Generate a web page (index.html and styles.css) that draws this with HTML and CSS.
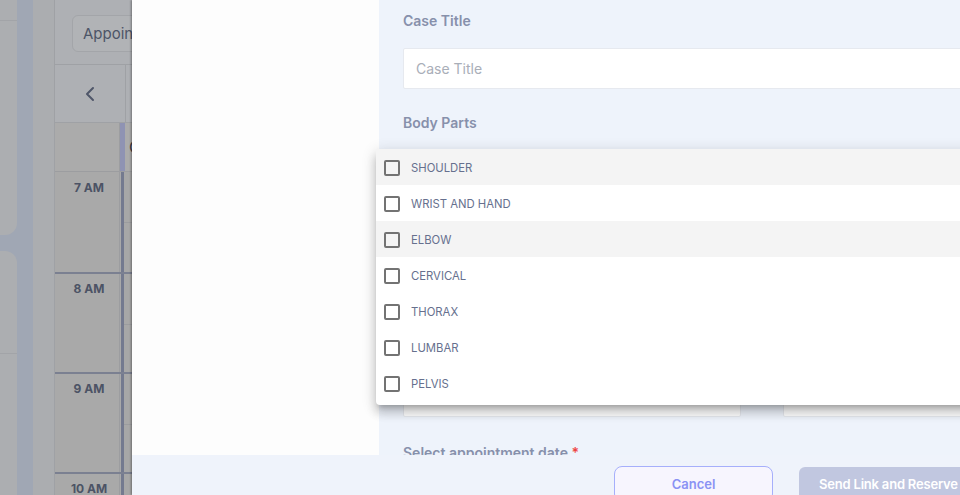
FILE: index.html
```html
<!DOCTYPE html>
<html lang="en">
<head>
  <meta charset="UTF-8" />
  <meta name="viewport" content="width=device-width, initial-scale=1.0" />
  <title>New Case</title>
  <link rel="stylesheet" href="styles.css">
</head>
<body>
  <div class="page">
    <aside class="side">
      <div class="side-card first"><div class="side-card-head"></div></div>
      <div class="side-card second"><div class="side-card-head"></div></div>
    </aside>
    <div class="rail"></div>
    <div class="gutter"></div>

    <section class="calendar">
      <div class="cal-head">
        <div class="view-select">Appointments</div>
      </div>
      <div class="cal-nav">
        <div class="nav-btn">
          <svg width="10" height="16" viewBox="0 0 10 16"><polyline points="8,2 2,8 8,14" fill="none" stroke="#4f5669" stroke-width="2" stroke-linecap="round" stroke-linejoin="round"/></svg>
        </div>
      </div>
      <div class="cal-days">
        <div class="time-cell"></div>
        <div class="day-bar"></div>
        <div class="day-label">C</div>
      </div>
      <div class="cal-hour first">
        <div class="time-cell">7 AM</div>
        <div class="day-line"></div>
        <div class="day-col"></div>
      </div>
      <div class="cal-hour">
        <div class="time-cell">8 AM</div>
        <div class="day-line"></div>
        <div class="day-col"></div>
      </div>
      <div class="cal-hour">
        <div class="time-cell">9 AM</div>
        <div class="day-line"></div>
        <div class="day-col"></div>
      </div>
      <div class="cal-hour">
        <div class="time-cell">10 AM</div>
        <div class="day-line"></div>
        <div class="day-col"></div>
      </div>
    </section>
  </div>

  <div class="modal">
    <div class="modal-main">
      <div class="modal-side"></div>
      <div class="modal-form">
        <label class="field-label">Case Title</label>
        <input class="text-input" type="text" placeholder="Case Title" />

        <label class="field-label spaced">Body Parts</label>
        <div class="select-box"></div>

        <div class="field-row">
          <div class="text-input wide"></div>
          <div class="text-input narrow"></div>
        </div>

        <label class="field-label date-label">Select appointment date <span class="req">*</span></label>

        <ul class="menu">
          <li class="menu-item shaded"><span class="check"></span>SHOULDER</li>
          <li class="menu-item"><span class="check"></span>WRIST AND HAND</li>
          <li class="menu-item shaded"><span class="check"></span>ELBOW</li>
          <li class="menu-item"><span class="check"></span>CERVICAL</li>
          <li class="menu-item"><span class="check"></span>THORAX</li>
          <li class="menu-item"><span class="check"></span>LUMBAR</li>
          <li class="menu-item"><span class="check"></span>PELVIS</li>
        </ul>
      </div>
    </div>
    <div class="modal-footer">
      <button class="btn btn-cancel">Cancel</button>
      <button class="btn btn-send">Send Link and Reserve Appointment</button>
    </div>
  </div>
</body>
</html>
```

FILE: styles.css
```css
body {
  margin: 0;
  width: 960px;
  height: 495px;
  overflow: hidden;
  font-family: 'Inter', 'Open Sans', sans-serif;
  background: #a9a9a9;
}

/* dimmed page behind the modal */
.page {
  display: flex;
  height: 495px;
  overflow: hidden;
}
.side {
  width: 17px;
  display: flex;
  flex-direction: column;
  gap: 16px;
  background: #a0a7b4;
}
.side-card {
  background: #acaeb1;
}
.side-card.first {
  height: 235px;
  border-radius: 0 0 12px 0;
}
.side-card.second {
  flex: 1;
  border-radius: 0 12px 0 0;
}
.side-card-head {
  height: 20px;
  border-bottom: 1px solid #a2a4a8;
}
.side-card.second .side-card-head {
  height: 102px;
}
.rail {
  width: 16px;
  background: #a0a7b4;
}
.gutter {
  width: 21px;
  background: #abadb0;
  border-right: 1px solid #9fa1a5;
}
.calendar {
  width: 120px;
  background: #aeb0b4;
}
.cal-head {
  height: 65px;
  border-bottom: 1px solid #9fa1a5;
  padding: 15px 0 0 17px;
  box-sizing: border-box;
}
.view-select {
  width: 140px;
  height: 37px;
  box-sizing: border-box;
  border: 1px solid #a3a5a9;
  border-radius: 6px;
  background: #b1b3b6;
  padding: 8px 0 0 10px;
  font-size: 15px;
  color: #4d5567;
  white-space: nowrap;
}
.cal-nav {
  height: 58px;
  border-bottom: 1px solid #9fa1a5;
  box-sizing: border-box;
}
.nav-btn {
  width: 70px;
  height: 100%;
  border-right: 1px solid #9fa1a5;
  display: flex;
  align-items: center;
  justify-content: center;
}
.cal-days {
  display: flex;
  height: 49px;
  background: #ababab;
  border-bottom: 1px solid #9c9da0;
  box-sizing: border-box;
}
.cal-days .time-cell {
  width: 65px;
  border-right: 1px solid #9c9da0;
}
.day-bar {
  width: 5px;
  background: #8f93b3;
}
.day-label {
  padding: 14px 0 0 4px;
  font-size: 16px;
  color: #3d3a44;
}
.cal-hour {
  display: flex;
  height: 100px;
  border-top: 2px solid #7b8091;
  box-sizing: border-box;
  background: #a9a9a9;
}
.cal-hour.first {
  border-top: none;
}
.time-cell {
  width: 65px;
  border-right: 1px solid #9c9da0;
  text-align: center;
  padding: 7px 0 0 4px;
  box-sizing: border-box;
  font-size: 12px;
  font-weight: 700;
  color: #4c5365;
}
.cal-hour.first .time-cell {
  padding-top: 8px;
}
.day-line {
  width: 3px;
  background: #747a8f;
  margin-left: 1px;
}
.day-col {
  flex: 1;
  background: #a7a7a7;
  background-image: linear-gradient(#9b9c9f, #9b9c9f);
  background-size: 100% 1px;
  background-position: 0 50px;
  background-repeat: no-repeat;
}

/* modal */
.modal {
  position: fixed;
  left: 132px;
  top: 0;
  right: 0;
  bottom: 0;
  display: flex;
  flex-direction: column;
  background: #fff;
  box-shadow: -1px 0 2px rgba(0,0,0,0.35);
}
.modal-main {
  display: flex;
  height: 455px;
  flex-shrink: 0;
  overflow: hidden;
}
.modal-side {
  width: 247px;
  flex-shrink: 0;
  background: #fdfdfd;
}
.modal-form {
  position: relative;
  flex: 1;
  min-width: 0;
  background: #eef3fb;
  padding: 11px 0 0 24px;
  display: flex;
  flex-direction: column;
  align-items: flex-start;
}
.field-label {
  font-size: 14px;
  line-height: 20px;
  font-weight: 600;
  color: #8790ab;
  white-space: nowrap;
}
.field-label.spaced {
  margin-top: 24px;
}
.req {
  color: #ef4444;
}
.text-input {
  margin-top: 17px;
  width: 600px;
  height: 41px;
  flex-shrink: 0;
  box-sizing: border-box;
  border: 1px solid #e6e9ef;
  border-radius: 2px;
  background: #fff;
  padding: 0 12px;
  font-family: inherit;
  font-size: 14px;
  color: #4b5563;
  outline: none;
}
.text-input::placeholder {
  color: #a9aeb8;
}
.select-box {
  margin-top: 16px;
  width: 600px;
  height: 41px;
  flex-shrink: 0;
  background: #fff;
}
.field-row {
  display: flex;
  gap: 42px;
  margin-top: 186px;
  flex-shrink: 0;
}
.field-row .text-input {
  margin-top: 0;
}
.text-input.wide {
  width: 338px;
}
.text-input.narrow {
  width: 200px;
}
.date-label {
  margin-top: 26px;
}

/* body parts dropdown */
.menu {
  position: absolute;
  left: -3px;
  top: 149px;
  width: 700px;
  margin: 0;
  padding: 0 0 4px;
  list-style: none;
  background: #fff;
  border-radius: 4px;
  box-shadow: 0 5px 5px -3px rgba(0,0,0,0.2), 0 8px 10px 1px rgba(0,0,0,0.14), 0 3px 14px 2px rgba(0,0,0,0.12);
}
.menu-item {
  display: flex;
  align-items: center;
  height: 36px;
  padding: 1px 0 0 8px;
  box-sizing: border-box;
  font-size: 11.3px;
  color: #66708e;
}
.menu-item.shaded {
  background: #f4f4f4;
}
.check {
  width: 16px;
  height: 16px;
  box-sizing: border-box;
  border: 2px solid #737373;
  border-radius: 2px;
  margin-right: 11px;
}

.modal-footer {
  flex: 1;
  background: #eff3fb;
  display: flex;
  align-items: flex-start;
  gap: 26px;
  padding: 11px 0 0 482px;
  overflow: hidden;
}
.btn {
  flex-shrink: 0;
  height: 36px;
  border-radius: 8px;
  font-family: inherit;
  font-size: 13px;
  font-weight: 600;
  white-space: nowrap;
}
.btn-cancel {
  width: 159px;
  background: #f7f5fe;
  border: 1.5px solid #a6affb;
  color: #8a92f4;
}
.btn-send {
  margin-top: 1px;
  width: 260px;
  border: none;
  border-radius: 6px;
  background: #c1c7e0;
  color: #fff;
  text-align: left;
  padding: 0 0 2px 20px;
  letter-spacing: -0.2px;
}
```
